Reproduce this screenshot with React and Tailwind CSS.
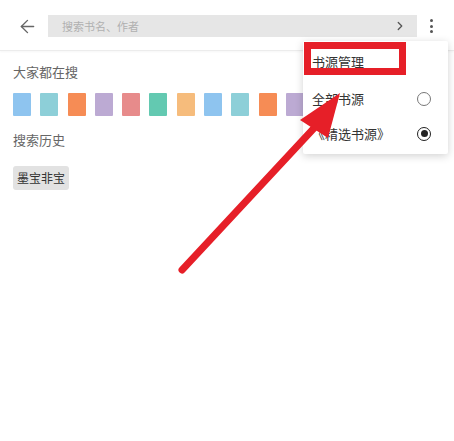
import React from 'react';
import { ArrowLeft, ChevronRight } from 'lucide-react';

const colors = [
  'bg-[#8ec4ef]',
  'bg-[#8dcfd8]',
  'bg-[#f68c55]',
  'bg-[#bcaad3]',
  'bg-[#e78b8b]',
  'bg-[#63c9b1]',
  'bg-[#f6bc7c]',
  'bg-[#8ec4ef]',
  'bg-[#8dcfd8]',
  'bg-[#f68c55]',
  'bg-[#bcaad3]',
  'bg-[#e78b8b]',
  'bg-[#63c9b1]',
  'bg-[#f6bc7c]',
  'bg-[#8ec4ef]',
];

const Radio = ({ checked }) => (
  <div
    className={`w-[14px] h-[14px] rounded-full border-[1.5px] flex items-center justify-center ${
      checked ? 'border-[#222]' : 'border-[#777]'
    }`}
  >
    {checked && <div className="w-[7px] h-[7px] rounded-full bg-[#222]" />}
  </div>
);

export default function App() {
  return (
    <div
      className="relative w-[454px] h-[441px] bg-white overflow-hidden"
      style={{ fontFamily: '"Noto Sans CJK SC", "Noto Sans", sans-serif' }}
    >
      {/* Header */}
      <div className="h-[51px] flex items-start pt-[15px] border-b border-[#ececec] shadow-[0_1px_2px_rgba(0,0,0,0.04)]">
        <div className="w-[48px] h-[22px] flex items-center pl-[17px]">
          <ArrowLeft size={21} strokeWidth={1.6} color="#666" />
        </div>
        <div className="w-[369px] h-[22px] bg-[#e6e6e6] flex items-center justify-between pl-[14px] pr-[10px]">
          <span className="text-[11px] text-[#b0b0b0] leading-none">搜索书名、作者</span>
          <ChevronRight size={14} strokeWidth={2.2} color="#555" />
        </div>
        <div className="w-[28px] h-[22px] flex flex-col items-center justify-center gap-[2.5px]">
          <div className="w-[3px] h-[3px] rounded-full bg-[#555]" />
          <div className="w-[3px] h-[3px] rounded-full bg-[#555]" />
          <div className="w-[3px] h-[3px] rounded-full bg-[#555]" />
        </div>
      </div>

      {/* Body */}
      <div className="pl-[13px] pt-[12px]">
        <div className="text-[13px] text-[#666] leading-[17px]">大家都在搜</div>
        <div className="flex gap-[9.3px] mt-[13px] w-[460px]">
          {colors.map((c, i) => (
            <div key={i} className={`w-[18px] h-[23px] shrink-0 rounded-[1px] ${c}`} />
          ))}
        </div>
        <div className="text-[13px] text-[#666] leading-[17px] mt-[15px]">搜索历史</div>
        <div className="mt-[18px] inline-flex items-center h-[24px] px-[4px] bg-[#e2e2e2] rounded-[3px] text-[12px] text-[#333]">
          墨宝非宝
        </div>
      </div>

      {/* Popup menu */}
      <div className="absolute left-[303px] top-[41px] w-[145px] h-[113px] bg-white rounded-[2px] shadow-[0_2px_8px_rgba(0,0,0,0.18)] pt-[3px]">
        <div className="h-[35px] flex items-center pl-[9px] text-[13px] text-[#333]">书源管理</div>
        <div className="mt-[2px] h-[35px] flex items-center justify-between pl-[9px] pr-[17px] text-[13px] text-[#333]">
          <span>全部书源</span>
          <Radio />
        </div>
        <div className="h-[35px] flex items-center justify-between pl-[9px] pr-[17px] text-[13px] text-[#333]">
          <span>《精选书源》</span>
          <Radio checked />
        </div>
      </div>

      {/* Annotation: red box */}
      <div className="absolute left-[304px] top-[42px] w-[102px] h-[33px] border-[7px] border-[#e61f28]" />

      {/* Annotation: red arrow */}
      <svg className="absolute left-0 top-0 pointer-events-none" width="454" height="441" viewBox="0 0 454 441">
        <line x1="182" y1="270" x2="316" y2="126" stroke="#e61f28" strokeWidth="7" strokeLinecap="round" />
        <polygon points="340,93 300,120 328,138" fill="#e61f28" />
      </svg>
    </div>
  );
}
